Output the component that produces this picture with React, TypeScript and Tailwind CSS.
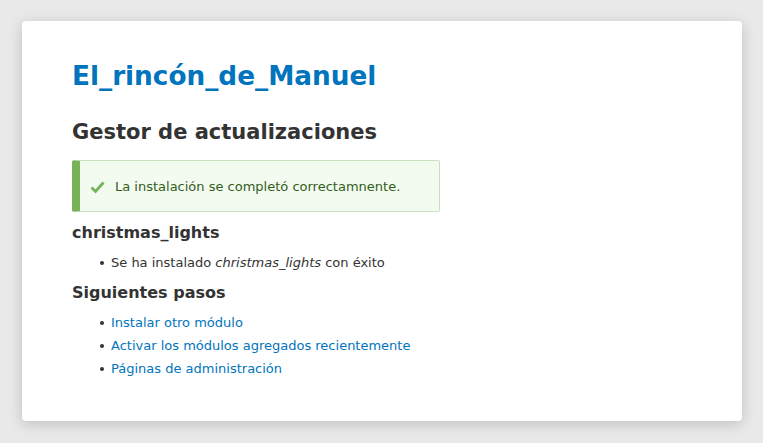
function Bullet(): JSX.Element {
  return <span className="mr-[7px] inline-block h-[4px] w-[4px] shrink-0 rounded-full bg-[#333]" />;
}

export default function App(): JSX.Element {
  return (
    <div className="min-h-[443px] bg-[#e8e9e8] pt-[21px] font-['DejaVu_Sans',sans-serif]">
      <div className="ml-[22px] h-[400px] w-[720px] rounded-[4px] bg-white px-[50px] pt-[40px] shadow-[0_3px_14px_rgba(0,0,0,0.18)]">
        <h1 className="text-[26.3px] font-bold leading-[30px] text-[#0074bd]">El_rincón_de_Manuel</h1>
        <h2 className="mt-[29px] text-[21px] font-bold leading-[24px] text-[#333]">Gestor de actualizaciones</h2>
        <div className="mt-[16px] flex h-[52px] w-[368px] items-center rounded-[2px] border border-l-[8px] border-[#c9e1bd] border-l-[#77b259] bg-[#f3faef] pl-[10px] pt-[1px] text-[13px] text-[#325e1c]">
          <svg className="mr-[10px] h-[14px] w-[15px]" viewBox="0 0 15 14">
            <path d="M1.5 7.5 L5.5 11.5 L13.5 2.5" fill="none" stroke="#77b259" strokeWidth="2.8" />
          </svg>
          La instalación se completó correctamnente.
        </div>
        <h3 className="mt-[11px] text-[16px] font-bold leading-[20px] text-[#333]">christmas_lights</h3>
        <ul className="mt-[10px] pl-[28px] text-[13px] leading-[20px] text-[#333]">
          <li className="flex items-center">
            <Bullet />
            <span>
              Se ha instalado <em>christmas_lights</em> con éxito
            </span>
          </li>
        </ul>
        <h3 className="mt-[10px] text-[16px] font-bold leading-[20px] text-[#333]">Siguientes pasos</h3>
        <ul className="mt-[10px] flex flex-col gap-[3px] pl-[28px] text-[13px] leading-[20px] text-[#333]">
          <li className="flex items-center">
            <Bullet />
            <a href="#" className="text-[#0074bd]">Instalar otro módulo</a>
          </li>
          <li className="flex items-center">
            <Bullet />
            <a href="#" className="text-[#0074bd]">Activar los módulos agregados recientemente</a>
          </li>
          <li className="flex items-center">
            <Bullet />
            <a href="#" className="text-[#0074bd]">Páginas de administración</a>
          </li>
        </ul>
      </div>
    </div>
  );
}
